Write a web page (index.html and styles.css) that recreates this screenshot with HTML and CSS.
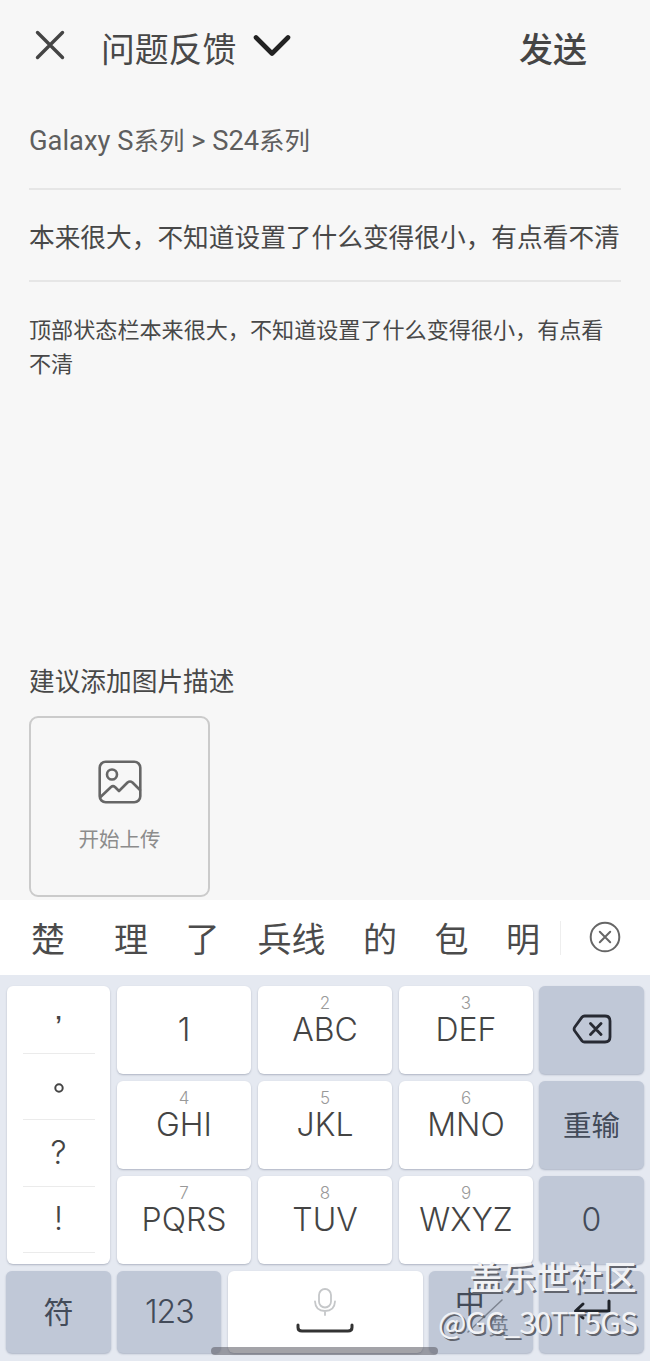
FILE: index.html
```
<!DOCTYPE html>
<html lang="zh-CN">
<head>
<meta charset="utf-8">
<title>问题反馈</title>
<link rel="stylesheet" href="styles.css">
</head>
<body>
<div class="screen">
  <header class="topbar">
    <svg class="close" width="30" height="30" viewBox="0 0 30 30"><path d="M2.5 2.5 27.5 27.5M27.5 2.5 2.5 27.5"/></svg>
    <h1 class="title">问题反馈</h1>
    <svg class="chevron" width="38" height="24" viewBox="0 0 38 24"><path d="M3 3.5 19 19.5 35 3.5"/></svg>
    <button class="send">发送</button>
  </header>
  <main class="form">
    <div class="category">Galaxy S<span class="series">系列</span> &gt; S24<span class="series">系列</span></div>
    <div class="subject">本来很大，不知道设置了什么变得很小，有点看不清</div>
    <div class="message">顶部状态栏本来很大，不知道设置了什么变得很小，有点看<br>不清</div>
    <div class="label">建议添加图片描述</div>
    <div class="upload">
      <svg class="picture" width="44" height="44" viewBox="0 0 44 44"><rect x="1.7" y="1.7" width="40.6" height="40.6" rx="6"/><circle cx="14" cy="14.5" r="5"/><path d="M2.5 37 13 27Q15 25.300 17 27L21 31 29.500 22.500Q32 20.500 34.500 22.500L42 30"/></svg>
      <span class="upload-text">开始上传</span>
    </div>
  </main>
  <div class="candidates">
    <span>楚</span><span>理</span><span>了</span><span>兵线</span><span>的</span><span>包</span><span>明</span>
    <i class="divider"></i>
    <svg class="dismiss" width="32" height="32" viewBox="0 0 32 32"><circle cx="16" cy="16" r="14.300"/><path d="M10.800 10.800 21.200 21.200M21.200 10.800 10.800 21.200"/></svg>
  </div>
  <div class="keyboard">
    <div class="keys">
      <div class="key punct"><span class="comma">’</span><span><svg width="12" height="12" viewBox="0 0 12 12"><circle cx="6" cy="6" r="3.700"/></svg></span><span>?</span><span>!</span></div>
      <div class="key one">1</div>
      <div class="key"><small>2</small>ABC</div>
      <div class="key"><small>3</small>DEF</div>
      <div class="key alt"><svg class="backspace" width="40" height="30" viewBox="0 0 40 30"><path d="M12.500 2H33Q38 2 38 7V23Q38 28 33 28H12.500Q11 28 10 26.800L2.800 17Q1.400 15 2.800 13L10 3.200Q11 2 12.500 2ZM18.500 9.500 29 20.500M29 9.500 18.500 20.500"/></svg></div>
      <div class="key"><small>4</small>GHI</div>
      <div class="key"><small>5</small>JKL</div>
      <div class="key"><small>6</small>MNO</div>
      <div class="key alt han">重输</div>
      <div class="key"><small>7</small>PQRS</div>
      <div class="key"><small>8</small>TUV</div>
      <div class="key"><small>9</small>WXYZ</div>
      <div class="key alt">0</div>
    </div>
    <div class="bottom-keys">
      <div class="key alt han symbol">符</div>
      <div class="key alt number">123</div>
      <div class="key space">
        <svg width="22" height="28" viewBox="0 0 22 28" class="mic"><rect x="5" y="1" width="12" height="18.500" rx="6"/><path d="M1 13.500Q1.500 23 11 23T21 13.500M11 23V27"/></svg>
        <svg width="58" height="10" viewBox="0 0 58 10" class="bar"><path d="M2 2V4.500Q2 8 6 8H52Q56 8 56 4.500V2"/></svg>
      </div>
      <div class="key alt language"><span class="zh">中</span><svg width="36" height="34" viewBox="0 0 36 34"><path d="M1 33 35 1"/></svg><span class="en">英</span></div>
      <div class="key alt enter"><svg width="40" height="24" viewBox="0 0 40 24"><path d="M37 2V12H5M11 5 3.500 12 11 19"/></svg></div>
    </div>
  </div>
  <div class="home"></div>
  <div class="watermark"><div class="community">盖乐世社区</div><div class="user">@GC_30TT5GS</div></div>
</div>
</body>
</html>
```
FILE: styles.css
```
* { box-sizing: border-box; }
body { margin: 0; background: #f7f7f7; }
.screen {
  position: relative;
  width: 650px;
  height: 1361px;
  overflow: hidden;
  display: flex;
  flex-direction: column;
  color: #484848;
  font-family: Roboto, "Noto Sans CJK SC", sans-serif;
}
svg { display: block; flex: none; fill: none; stroke: #444; stroke-linecap: round; stroke-linejoin: round; }
.topbar { height: 94px; padding: 0 63px 2px 35px; display: flex; align-items: center; }
.close { stroke-width: 3.4; margin-top: -2px; }
.title { margin: 2px 0 0 36px; font-size: 33.800px; font-weight: 400; white-space: nowrap; }
.chevron { margin: -1px 0 0 17px; stroke: #222; stroke-width: 4.600; }
.send { margin: 2px 0 0 auto; padding: 0; border: 0; background: none; color: #454545; font: 500 34px "Noto Sans CJK SC", sans-serif; white-space: nowrap; }
.form { height: 806px; padding: 0 29px; display: flex; flex-direction: column; white-space: nowrap; }
.category { height: 96px; line-height: 95px; font-size: 27.300px; border-bottom: 2px solid #e6e6e6; color: #5e5e5e; }
.series { font-size: 25.500px; }
.subject { height: 92px; line-height: 96px; font-size: 25.700px; border-bottom: 2px solid #e6e6e6; }
.message { height: 367px; padding-top: 31px; font-size: 22.100px; line-height: 34px; }
.label { height: 67px; line-height: 66px; font-size: 25.700px; }
.upload { width: 181px; height: 181px; flex: none; border: 2px solid #cbcbcb; border-radius: 9px; padding-top: 42px; display: flex; flex-direction: column; align-items: center; }
.picture { stroke: #666; stroke-width: 2.600; }
.upload-text { margin-top: 21px; line-height: 30px; font-size: 20.500px; color: #8c8c8c; }
.candidates {
  height: 75px;
  flex: none;
  padding-left: 31px;
  display: flex;
  align-items: center;
  background: #fff;
  color: #4b4b4b;
  font: 34px "Noto Sans CJK SC", sans-serif;
  white-space: nowrap;
}
.candidates span { margin-right: 37.500px; }
.candidates span:nth-child(1) { margin-right: 49px; }
.candidates span:nth-child(3) { margin-right: 38px; }
.candidates span:nth-child(7) { margin-right: 20px; }
.divider { width: 1px; height: 34px; margin-right: 28px; background: #eee; }
.dismiss { stroke: #666; stroke-width: 2; margin-top: -1px; }
.keyboard { flex: 1; padding: 11px 6px 8px; background: #e5e9f1; }
.keys { display: grid; grid-template-columns: 103px 134px 134px 134px 104px; grid-template-rows: repeat(3, 88px); gap: 7px; margin-left: 1px; }
.keys .alt { margin-left: -1px; }
.bottom-keys { display: grid; grid-template-columns: 105px 104px 195px 104px 105px; column-gap: 6.250px; height: 82px; margin-top: 7px; }
.key {
  display: flex;
  flex-direction: column;
  align-items: center;
  justify-content: center;
  border-radius: 6px;
  background: #fff;
  box-shadow: 0 1px 2px #aeb4c2;
  color: #444;
  font: 350 32px/36px Inter, sans-serif;
}
.key small { height: 16px; margin-top: -16px; font-size: 17px; font-weight: 300; line-height: 15px; color: #999; }
.key.alt { background: #c0c8d7; box-shadow: 0 1px 2px #abb3c4; color: #434b59; }
.key.han { font: 400 28.500px/36px "Noto Sans CJK SC", sans-serif; padding-bottom: 2px; }
.key.symbol { font-size: 30px; padding-bottom: 4px; }
.key.number { letter-spacing: -1px; }
.punct { grid-row: span 3; justify-content: flex-start; padding-top: 1px; }
.punct span { width: 72px; height: 66.500px; flex: none; display: flex; align-items: center; justify-content: center; border-bottom: 1px solid #ebebeb; }
.punct svg { stroke-width: 2; margin-top: 3px; }
.punct .comma { padding-top: 15px; font-family: "Liberation Sans", sans-serif; font-size: 34px; font-weight: 400; }
.backspace { stroke: #272a33; stroke-width: 2.800; margin-top: -2px; }
.mic { stroke: #c5c7c9; stroke-width: 1.800; margin-top: -4px; }
.bar { stroke: #333; stroke-width: 3; margin-top: 7px; }
.key.language { flex-direction: row; justify-content: flex-start; padding-left: 26px; font-family: "Noto Sans CJK SC", sans-serif; font-weight: 400; }
.zh { font-size: 30px; margin-top: -24px; }
.language svg { margin: 8px 0 0 -18px; stroke: #7d8490; stroke-width: 1.500; }
.en { font-size: 20px; margin: 29px 0 0 -14px; color: #747d8c; }
.enter svg { stroke: #20242b; stroke-width: 3; margin-top: -2px; }
.home { position: absolute; left: 211px; top: 1347px; width: 227px; height: 8px; border-radius: 4px; background: rgba(88, 88, 96, .55); }
.watermark { position: absolute; left: 469px; top: 1253px; color: #f2f3f6; text-shadow: 2px 2px 0 #62656e; white-space: nowrap; font-family: "Noto Sans CJK SC", sans-serif; }
.community { font-size: 33.500px; line-height: 46px; font-weight: 500; }
.user { margin-left: -31px; font-size: 30px; line-height: 44px; letter-spacing: -0.950px; }
```
